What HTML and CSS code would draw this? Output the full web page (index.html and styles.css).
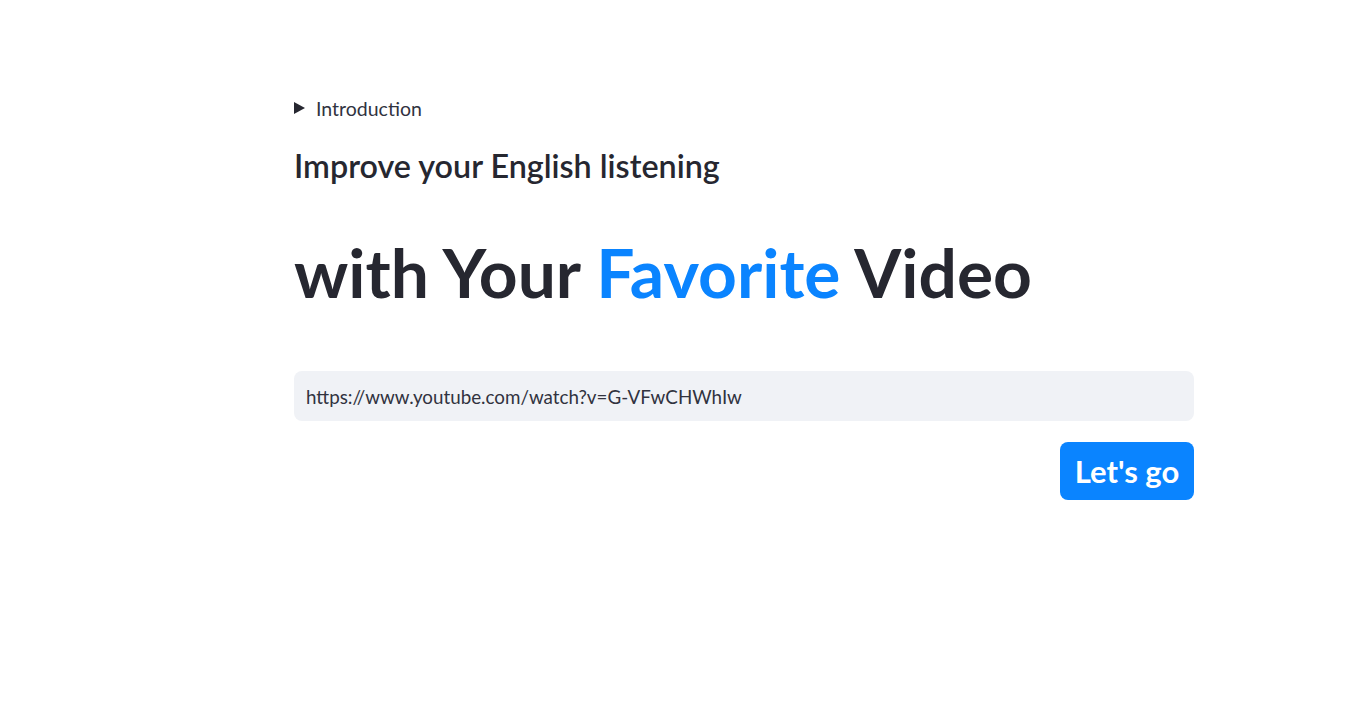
FILE: index.html
```html
<!DOCTYPE html>
<html>
<head>
<meta charset="utf-8">
<link rel="stylesheet" href="styles.css">
</head>
<body>
<main class="page">
  <div class="content">
    <div class="expander">
      <span class="tri"></span>
      <span class="expander-label">Introduction</span>
    </div>
    <h3 class="subhead">Improve your English listening</h3>
    <h1 class="headline">with Your <span class="accent">Favorite</span> Video</h1>
    <div class="input-box">https://www.youtube.com/watch?v=G-VFwCHWhIw</div>
    <div class="actions">
      <button class="go-btn">Let's go</button>
    </div>
  </div>
</main>
</body>
</html>
```
FILE: styles.css
```css
html, body {
  margin: 0;
  padding: 0;
  background: #ffffff;
}
body {
  font-family: Lato, "Open Sans", sans-serif;
  color: #31333f;
}
.page {
  display: flex;
  padding-top: 96px;
  padding-left: 294px;
}
.content {
  width: 900px;
  display: flex;
  flex-direction: column;
}
.expander {
  display: flex;
  align-items: center;
  gap: 11px;
  height: 24px;
}
.tri {
  width: 0;
  height: 0;
  margin-top: -1px;
  border-top: 6px solid transparent;
  border-bottom: 6px solid transparent;
  border-left: 11px solid #262730;
}
.expander-label {
  font-size: 19.5px;
  color: #31333f;
}
.subhead {
  margin: 26px 0 0;
  font-size: 32.3px;
  font-weight: 600;
  color: #262730;
  line-height: 40px;
}
.headline {
  margin: 44px 0 0;
  font-size: 67.7px;
  font-weight: 700;
  color: #262730;
  line-height: 84px;
}
.accent {
  color: #0a84ff;
}
.input-box {
  margin-top: 57px;
  height: 50px;
  box-sizing: border-box;
  background: #f0f2f6;
  border-radius: 8px;
  padding: 0 12px;
  display: flex;
  align-items: center;
  font-size: 18.8px;
  color: #31333f;
}
.actions {
  display: flex;
  justify-content: flex-end;
  margin-top: 21px;
}
.go-btn {
  height: 58px;
  width: 134px;
  border: none;
  border-radius: 8px;
  background: #0a84ff;
  color: #ffffff;
  font-family: inherit;
  font-size: 31px;
  font-weight: 700;
  padding: 0;
}
```
